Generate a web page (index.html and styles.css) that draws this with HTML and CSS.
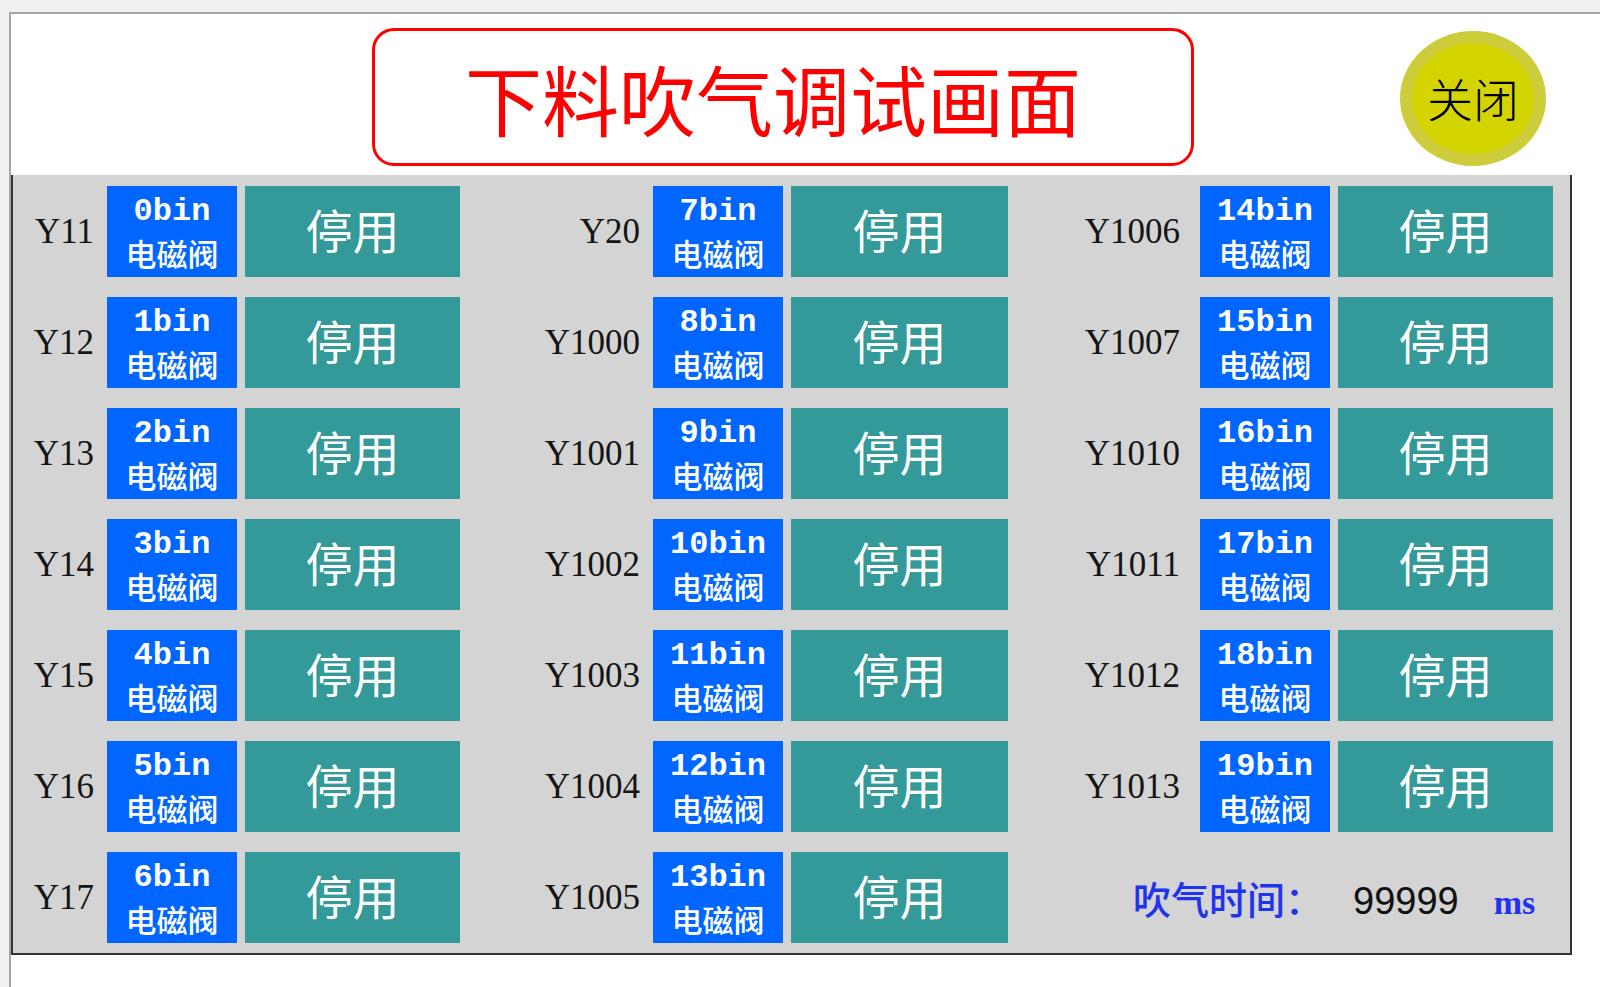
FILE: index.html
```html
<!DOCTYPE html>
<html lang="zh-CN">
<head>
<meta charset="utf-8">
<title>下料吹气调试画面</title>
<link rel="stylesheet" href="styles.css">
</head>
<body>
<div class="window">
  <header class="header">
    <div class="title-box"><h1 class="title">下料吹气调试画面</h1></div>
    <button class="close-btn">关闭</button>
  </header>
  <main class="panel">
    <div class="col col-1">
      <div class="item"><span class="addr">Y11</span><div class="valve"><span class="bin">0bin</span><span class="valve-name">电磁阀</span></div><button class="toggle">停用</button></div>
      <div class="item"><span class="addr">Y12</span><div class="valve"><span class="bin">1bin</span><span class="valve-name">电磁阀</span></div><button class="toggle">停用</button></div>
      <div class="item"><span class="addr">Y13</span><div class="valve"><span class="bin">2bin</span><span class="valve-name">电磁阀</span></div><button class="toggle">停用</button></div>
      <div class="item"><span class="addr">Y14</span><div class="valve"><span class="bin">3bin</span><span class="valve-name">电磁阀</span></div><button class="toggle">停用</button></div>
      <div class="item"><span class="addr">Y15</span><div class="valve"><span class="bin">4bin</span><span class="valve-name">电磁阀</span></div><button class="toggle">停用</button></div>
      <div class="item"><span class="addr">Y16</span><div class="valve"><span class="bin">5bin</span><span class="valve-name">电磁阀</span></div><button class="toggle">停用</button></div>
      <div class="item"><span class="addr">Y17</span><div class="valve"><span class="bin">6bin</span><span class="valve-name">电磁阀</span></div><button class="toggle">停用</button></div>
    </div>
    <div class="col col-2">
      <div class="item"><span class="addr">Y20</span><div class="valve"><span class="bin">7bin</span><span class="valve-name">电磁阀</span></div><button class="toggle">停用</button></div>
      <div class="item"><span class="addr">Y1000</span><div class="valve"><span class="bin">8bin</span><span class="valve-name">电磁阀</span></div><button class="toggle">停用</button></div>
      <div class="item"><span class="addr">Y1001</span><div class="valve"><span class="bin">9bin</span><span class="valve-name">电磁阀</span></div><button class="toggle">停用</button></div>
      <div class="item"><span class="addr">Y1002</span><div class="valve"><span class="bin">10bin</span><span class="valve-name">电磁阀</span></div><button class="toggle">停用</button></div>
      <div class="item"><span class="addr">Y1003</span><div class="valve"><span class="bin">11bin</span><span class="valve-name">电磁阀</span></div><button class="toggle">停用</button></div>
      <div class="item"><span class="addr">Y1004</span><div class="valve"><span class="bin">12bin</span><span class="valve-name">电磁阀</span></div><button class="toggle">停用</button></div>
      <div class="item"><span class="addr">Y1005</span><div class="valve"><span class="bin">13bin</span><span class="valve-name">电磁阀</span></div><button class="toggle">停用</button></div>
    </div>
    <div class="col col-3">
      <div class="item"><span class="addr">Y1006</span><div class="valve"><span class="bin">14bin</span><span class="valve-name">电磁阀</span></div><button class="toggle">停用</button></div>
      <div class="item"><span class="addr">Y1007</span><div class="valve"><span class="bin">15bin</span><span class="valve-name">电磁阀</span></div><button class="toggle">停用</button></div>
      <div class="item"><span class="addr">Y1010</span><div class="valve"><span class="bin">16bin</span><span class="valve-name">电磁阀</span></div><button class="toggle">停用</button></div>
      <div class="item"><span class="addr">Y1011</span><div class="valve"><span class="bin">17bin</span><span class="valve-name">电磁阀</span></div><button class="toggle">停用</button></div>
      <div class="item"><span class="addr">Y1012</span><div class="valve"><span class="bin">18bin</span><span class="valve-name">电磁阀</span></div><button class="toggle">停用</button></div>
      <div class="item"><span class="addr">Y1013</span><div class="valve"><span class="bin">19bin</span><span class="valve-name">电磁阀</span></div><button class="toggle">停用</button></div>
      <div class="blow">
        <div class="blow-line">
          <span class="blow-label">吹气时间：</span>
          <span class="blow-value">99999</span>
          <span class="blow-unit">ms</span>
        </div>
      </div>
    </div>
  </main>
</div>
</body>
</html>
```

FILE: styles.css
```css
* { box-sizing: border-box; }
html, body { margin: 0; padding: 0; }
body {
  width: 1600px;
  height: 987px;
  overflow: hidden;
  background: #f0f0f0;
  font-family: "Noto Sans CJK SC", "Liberation Sans", sans-serif;
}
.window {
  margin: 12px 0 0 9px;
  height: 975px;
  background: #ffffff;
  border-top: 2px solid #a6a6a6;
  border-left: 2px solid #a6a6a6;
}
.header {
  display: flex;
  align-items: flex-start;
  height: 161px;
  padding-top: 14px;
}
.title-box {
  margin-left: 361px;
  width: 822px;
  height: 138px;
  padding-right: 20px;
  border: 3px solid #ff0000;
  border-radius: 22px;
  display: flex;
  align-items: center;
  justify-content: center;
}
.title {
  margin: 0;
  font-size: 77px;
  font-weight: 400;
  line-height: 1;
  color: #ff0000;
}
.close-btn {
  margin-left: 206px;
  margin-top: 3px;
  width: 146px;
  height: 135px;
  padding: 0 0 4px 0;
  border-radius: 50%;
  border: 12px solid #cdcd3c;
  background: #d4d400;
  color: #000;
  font-family: "Noto Sans CJK SC", sans-serif;
  font-size: 46px;
  font-weight: 300;
  display: flex;
  align-items: center;
  justify-content: center;
}
.panel {
  display: flex;
  width: 1561px;
  height: 780px;
  padding-top: 11px;
  background: #d4d4d4;
  border-left: 2px solid #333333;
  border-right: 2px solid #333333;
  border-bottom: 2px solid #333333;
}
.col {
  display: flex;
  flex-direction: column;
  gap: 20px;
}
.col-1 { width: 447px; }
.col-2 { width: 548px; }
.col-3 { width: 545px; }
.item {
  display: flex;
  align-items: center;
  justify-content: flex-end;
  height: 91px;
}
.addr {
  font-family: "Liberation Serif", serif;
  font-size: 35px;
  color: #151515;
  margin-right: 13px;
}
.col-3 .addr { margin-right: 20px; }
.valve {
  width: 130px;
  height: 91px;
  margin-right: 8px;
  padding-top: 4px;
  background: #0066ff;
  color: #ffffff;
  display: flex;
  flex-direction: column;
  align-items: center;
  justify-content: center;
}
.bin {
  font-family: "Liberation Mono", monospace;
  font-weight: 700;
  font-size: 32px;
  line-height: normal;
}
.valve-name {
  font-size: 31px;
  font-weight: 500;
  line-height: normal;
}
.toggle {
  width: 215px;
  height: 91px;
  padding: 0 0 6px 0;
  border: 0;
  background: #339999;
  color: #ffffff;
  font-family: "Noto Sans CJK SC", sans-serif;
  font-size: 47px;
  font-weight: 400;
}
.col-2 .toggle { width: 217px; }
.blow {
  display: flex;
  align-items: center;
  height: 91px;
  padding-left: 125px;
}
.blow-line {
  display: flex;
  align-items: baseline;
}
.blow-label {
  font-size: 38px;
  color: #2233ee;
  font-weight: 500;
}
.blow-value {
  margin-left: 30px;
  font-family: "Liberation Sans", sans-serif;
  font-size: 38px;
  color: #111111;
}
.blow-unit {
  margin-left: 35px;
  font-family: "Liberation Serif", serif;
  font-weight: 700;
  font-size: 34px;
  color: #2233ee;
}
```
